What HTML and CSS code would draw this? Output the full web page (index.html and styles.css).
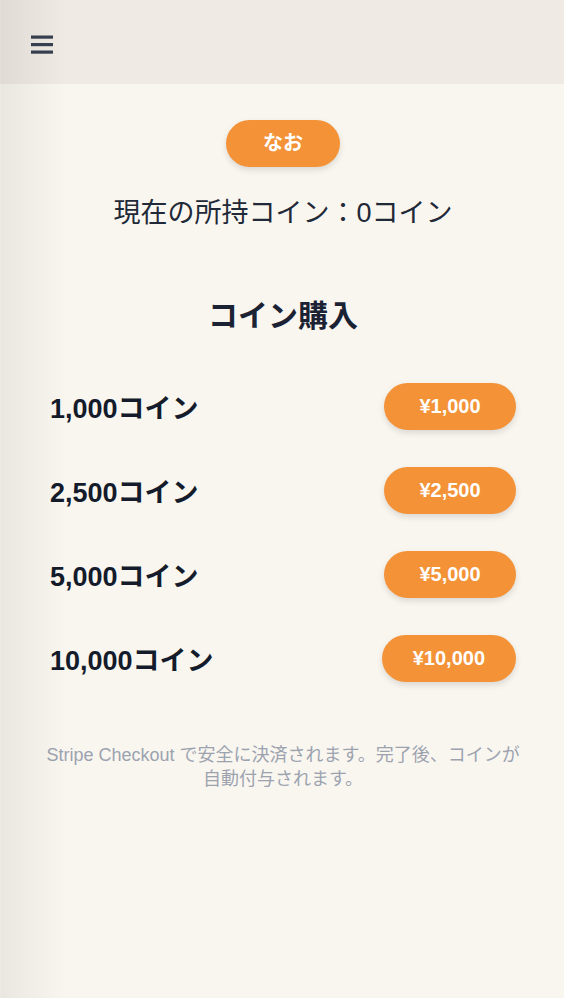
FILE: index.html
```html
<!DOCTYPE html>
<html lang="ja">
<head>
<meta charset="UTF-8" />
<meta name="viewport" content="width=device-width, initial-scale=1" />
<title>コイン購入</title>
<link rel="stylesheet" href="styles.css">
</head>
<body>

<header class="topbar">
  <button class="menu-btn" aria-label="メニュー">
    <svg width="22" height="20" viewBox="0 0 22 20">
      <rect x="0" y="0.5" width="22" height="3.2" fill="#374151" />
      <rect x="0" y="8" width="22" height="3.2" fill="#374151" />
      <rect x="0" y="15.5" width="22" height="3.2" fill="#374151" />
    </svg>
  </button>
</header>

<main class="container">
  <div class="user-pill">なお</div>
  <p class="balance">現在の所持コイン：0コイン</p>

  <h2 class="section-title">コイン購入</h2>

  <ul class="plans">
    <li class="plan">
      <span class="plan-name">1,000コイン</span>
      <button class="buy-btn">¥1,000</button>
    </li>
    <li class="plan">
      <span class="plan-name">2,500コイン</span>
      <button class="buy-btn">¥2,500</button>
    </li>
    <li class="plan">
      <span class="plan-name">5,000コイン</span>
      <button class="buy-btn">¥5,000</button>
    </li>
    <li class="plan">
      <span class="plan-name">10,000コイン</span>
      <button class="buy-btn">¥10,000</button>
    </li>
  </ul>

  <p class="note">Stripe Checkout で安全に決済されます。完了後、コインが<br>自動付与されます。</p>
</main>

</body>
</html>
```

FILE: styles.css
```css
/* Basic reset */
* {
  box-sizing: border-box;
  font-family: 'Liberation Sans', 'Noto Sans CJK JP', sans-serif;
}
body {
  background: #f9f6f0;
  margin: 0;
  min-height: 100vh;
  color: #1a2233;
}
body::before {
  content: '';
  position: fixed;
  top: 0;
  left: 0;
  bottom: 0;
  width: 64px;
  background: linear-gradient(to right, rgb(0 0 0 / 0.06), rgb(0 0 0 / 0));
  border-left: 2px solid rgb(0 0 0 / 0.05);
  pointer-events: none;
}
.topbar {
  height: 84px;
  background: #efeae3;
  display: flex;
  align-items: flex-start;
  padding: 35px 31px 0;
}
.menu-btn {
  background: none;
  border: none;
  padding: 0;
  display: flex;
  cursor: pointer;
}
.container {
  padding: 36px 48px 40px 50px;
  display: flex;
  flex-direction: column;
  align-items: center;
}
.user-pill {
  background: #f39237;
  color: white;
  font-weight: 700;
  font-size: 20px;
  line-height: 47px;
  height: 47px;
  width: 114px;
  text-align: center;
  border-radius: 24px;
  box-shadow: 0 3px 6px rgb(0 0 0 / 0.12);
}
.balance {
  font-size: 27px;
  margin: 29px 0 0;
  line-height: 34px;
  color: #1f2937;
}
.section-title {
  font-size: 30px;
  font-weight: 700;
  margin: 69px 0 0;
  line-height: 34px;
}
.plans {
  list-style: none;
  margin: 50px 0 0;
  padding: 0;
  width: 100%;
  display: grid;
  gap: 37px;
}
.plan {
  display: flex;
  justify-content: space-between;
  align-items: center;
  height: 47px;
}
.plan-name {
  font-size: 27px;
  font-weight: 700;
  color: #141b2b;
}
.buy-btn {
  background: #f39237;
  color: white;
  border: none;
  font-weight: 700;
  font-size: 20px;
  height: 47px;
  min-width: 132px;
  padding: 0 31px;
  border-radius: 24px;
  box-shadow: 0 3px 6px rgb(0 0 0 / 0.12);
  cursor: pointer;
}
.note {
  margin: 61px 0 0;
  text-align: center;
  font-size: 18px;
  line-height: 24px;
  color: #9ca3af;
  white-space: nowrap;
}
```
